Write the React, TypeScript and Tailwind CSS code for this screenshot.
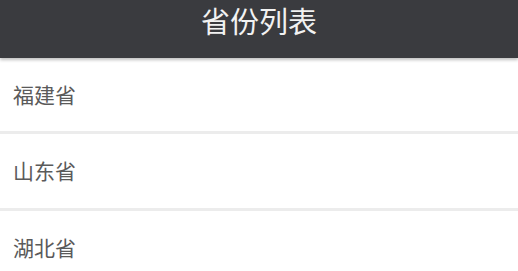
export default function App() {
  const items = ["福建省", "山东省", "湖北省"];
  return (
    <div
      className="w-[518px] h-[271px] overflow-hidden bg-white"
      style={{ fontFamily: '"Noto Sans CJK SC", "Noto Sans", sans-serif' }}
    >
      <div className="relative z-10 h-[58px] bg-[#3a3b3f] shadow-[0_2px_3px_rgba(0,0,0,0.25)] flex justify-center">
        <h1 className="text-[29px] leading-[40px] text-[#f2f2f2] font-normal">省份列表</h1>
      </div>
      <ul className="flex flex-col">
        <li className="h-[76px] flex items-center pl-[13px] border-b-[3px] border-[#ececec] text-[21px] text-[#5a5a5a]">
          {items[0]}
        </li>
        <li className="h-[77px] flex items-center pl-[13px] border-b-[3px] border-[#ececec] text-[21px] text-[#5a5a5a]">
          {items[1]}
        </li>
        <li className="h-[74px] flex items-center pl-[13px] text-[21px] text-[#5a5a5a]">
          {items[2]}
        </li>
      </ul>
    </div>
  );
}
